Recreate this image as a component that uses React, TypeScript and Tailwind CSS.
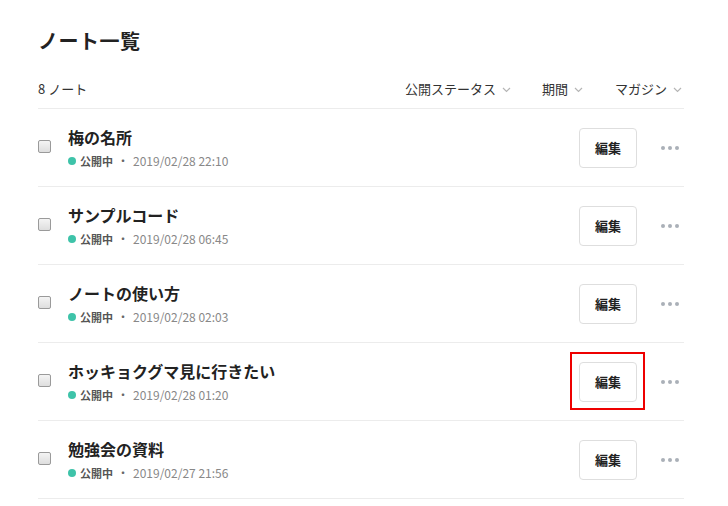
const notes = [
  { title: '梅の名所', date: '2019/02/28 22:10' },
  { title: 'サンプルコード', date: '2019/02/28 06:45' },
  { title: 'ノートの使い方', date: '2019/02/28 02:03' },
  { title: 'ホッキョクグマ見に行きたい', date: '2019/02/28 01:20', highlight: true },
  { title: '勉強会の資料', date: '2019/02/27 21:56' },
];

function Chevron() {
  return (
    <svg width="9" height="6" viewBox="0 0 9 6" className="ml-[6px] mt-[1px]">
      <path d="M1 1l3.5 3.5L8 1" fill="none" stroke="#b5b5b5" strokeWidth="1.2" />
    </svg>
  );
}

export default function App() {
  return (
    <div
      className="w-[728px] h-[506px] overflow-hidden bg-white pl-[38px] pr-[44px] text-[#222]"
      style={{ fontFamily: '"Noto Sans CJK JP", "Noto Sans", sans-serif' }}
    >
      {/* Header */}
      <h1 className="pt-[27px] text-[20px] font-bold leading-[28px] tracking-[0.5px]">ノート一覧</h1>

      <div className="mt-[25px] flex items-center justify-between border-b border-[#ececec] pb-[10px] text-[13px] leading-[18px]">
        <span className="text-[#333]">8 ノート</span>
        <div className="mr-[2px] flex items-center text-[#333]">
          <span className="flex items-center">公開ステータス<Chevron /></span>
          <span className="ml-[31px] flex items-center">期間<Chevron /></span>
          <span className="ml-[32px] flex items-center">マガジン<Chevron /></span>
        </div>
      </div>

      {/* List */}
      {notes.map((note) => (
        <div key={note.title} className="flex h-[78px] items-center border-b border-[#ececec]">
          <div className="mb-[3px] h-[13px] w-[13px] rounded-[2px] border border-[#9a9a9a] bg-gradient-to-b from-[#f4f4f4] to-[#dedede]" />
          <div className="ml-[17px] flex-1">
            <div className="text-[16px] font-bold leading-[22px]">{note.title}</div>
            <div className="mt-[5px] flex items-center text-[12px] leading-[16px]">
              <span className="h-[8px] w-[8px] rounded-full bg-[#3ec3a9]" />
              <span className="ml-[4px] text-[11px] font-bold text-[#555]">公開中</span>
              <span className="ml-[4px] text-[#666]">・</span>
              <span className="ml-[4px] text-[#888]">{note.date}</span>
            </div>
          </div>
          <div className="relative">
            <button className="flex h-[40px] w-[58px] items-center justify-center rounded-[4px] border border-[#dedede] bg-white text-[13px] font-bold text-[#222]">
              編集
            </button>
            {note.highlight && (
              <div className="absolute left-[-9px] top-[-10px] h-[58px] w-[75px] border-2 border-[#ee0000]" />
            )}
          </div>
          <div className="ml-[24px] mr-[5px] flex gap-[3px]">
            <span className="h-[4px] w-[4px] rounded-full bg-[#aab0b8]" />
            <span className="h-[4px] w-[4px] rounded-full bg-[#aab0b8]" />
            <span className="h-[4px] w-[4px] rounded-full bg-[#aab0b8]" />
          </div>
        </div>
      ))}
    </div>
  );
}
